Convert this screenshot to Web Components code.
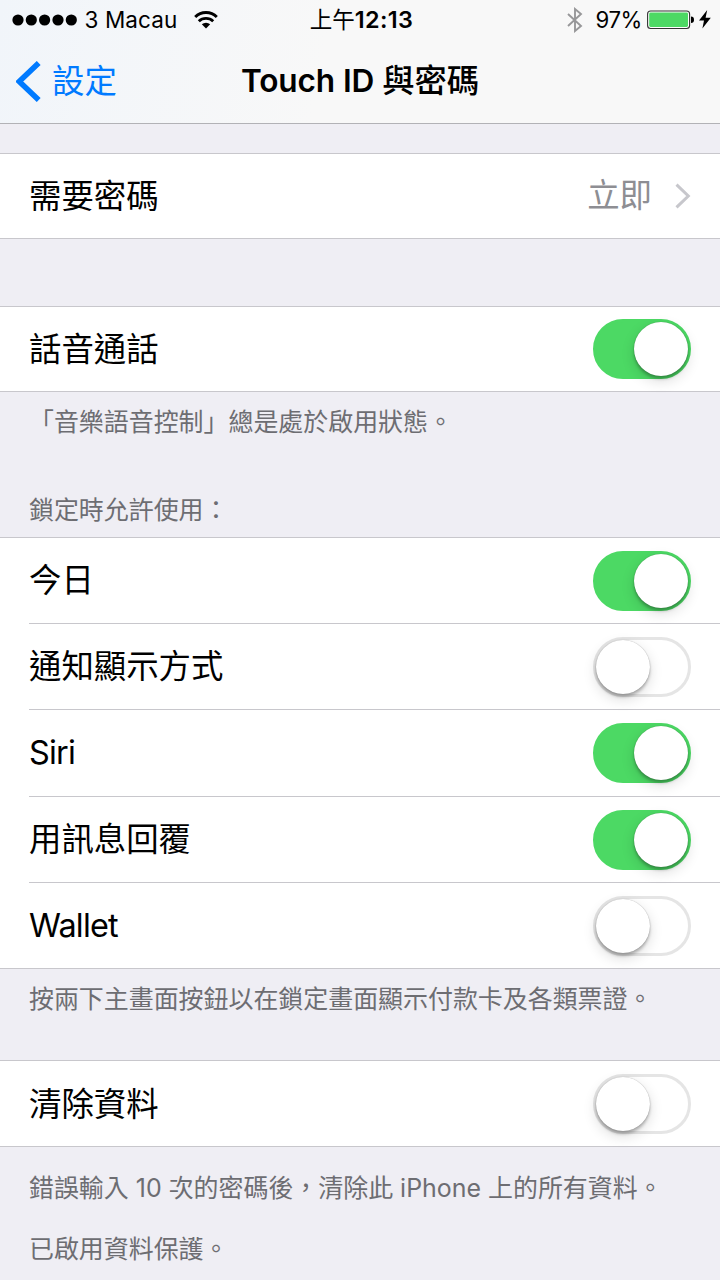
<!DOCTYPE html>
<html lang="zh-Hant">
<head>
<meta charset="utf-8">
<title>Touch ID 與密碼</title>
<style>
html,body{margin:0;background:#efeef4}
body{font-family:Inter,"Noto Sans CJK TC",sans-serif;width:720px;height:1280px;overflow:hidden;color:#000}
</style>
</head>
<body>
<settings-page></settings-page>
<script>
function define(name, html){
  const template=document.createElement('template');
  template.innerHTML=html;
  customElements.define(name,class extends HTMLElement{
    constructor(){super();this.attachShadow({mode:'open'}).appendChild(template.content.cloneNode(true));}
  });
}

define('status-bar',`
<style>
:host{display:grid;grid-template-columns:1fr auto 1fr;height:39px;align-items:center;font-size:22.5px;line-height:39px;white-space:nowrap}
svg{display:block;flex:none}
.left,.right{display:flex;align-items:center}
.left{padding-left:12px}
.right{justify-content:flex-end;padding-right:9px}
.carrier{margin:0 17px 0 6.5px;letter-spacing:.1px}
.time{font-weight:600;font-size:23.4px;letter-spacing:.4px;padding-left:3px}
.time span{font-weight:400;font-size:22.5px;letter-spacing:0}
.pct{margin:0 5px 0 13px;font-size:22.2px;letter-spacing:-.4px}
</style>
<div class="left">
<svg width="66" height="12" viewBox="0 0 66 12"><circle cx="6" cy="6" r="5.6"/><circle cx="19.3" cy="6" r="5.6"/><circle cx="32.6" cy="6" r="5.6"/><circle cx="46" cy="6" r="5.6"/><circle cx="59.3" cy="6" r="5.6"/></svg>
<span class="carrier">3 Macau</span>
<svg width="24" height="18" viewBox="0 0 24 18"><path d="M1.2 6.1A15 15 0 0 1 22.8 6.1M4.8 10.2A10.5 10.5 0 0 1 19.2 10.2" fill="none" stroke="#000" stroke-width="2.9"/><path d="M7.8 13.2A6.4 6.4 0 0 1 16.2 13.2L12 17.6Z"/></svg>
</div>
<div class="time"><span>上午</span>12:13</div>
<div class="right">
<svg width="16" height="26" viewBox="0 0 16 26"><path d="M1 7L14 19L8 24V2L14 7L1 19" fill="none" stroke="#979799" stroke-width="1.9"/></svg>
<span class="pct">97%</span>
<svg width="47" height="20" viewBox="0 0 47 20"><rect x=".6" y="1" width="42" height="17.5" rx="3" fill="#fff" stroke="#333" stroke-width="1.1"/><rect x="2.2" y="2.6" width="38.8" height="14.3" rx="1.4" fill="#4cd964"/><path d="M44 6.5Q47 6.5 47 9.7T44 13Z"/></svg>
<svg style="margin-left:5px" width="12" height="19" viewBox="0 0 12 19"><path d="M8.2 0L0 10.5H5L3.4 18.5L11.8 7.7H6.6Z"/></svg>
</div>`);

define('nav-bar',`
<style>
:host{display:grid;grid-template-columns:1fr auto 1fr;height:84px;align-items:center;border-bottom:1px solid #b2b2b6;line-height:82px;white-space:nowrap}
.back{display:flex;align-items:center;color:#007aff;font-size:32.4px;padding-left:16px;gap:11px}
.back span{padding-top:1px}
.title{font-size:31.6px;font-weight:600;letter-spacing:-.1px;padding-bottom:1px}
.title ::slotted([lang]){font-weight:500;font-size:32.3px;letter-spacing:0}
</style>
<div class="back"><svg width="25" height="41" viewBox="0 0 25 41"><path d="M22.7 2L3.2 20.5L22.7 39" fill="none" stroke="#007aff" stroke-width="5.6"/></svg><span><slot name="back"></slot></span></div>
<div class="title"><slot></slot></div>`);

define('toggle-switch',`
<style>
:host{display:flex;box-sizing:border-box;width:98px;height:60px;border-radius:30px;border:3px solid #e5e5e5;align-items:center;background:#fff}
:host([on]){background:#4cd964;border-color:#4cd964;justify-content:flex-end}
i{width:54px;height:54px;border-radius:50%;background:#fff;box-shadow:0 0 1px rgba(0,0,0,.35),0 3px 3px rgba(0,0,0,.24),0 5px 14px rgba(0,0,0,.14)}
</style><i></i>`);

define('chevron-right',`
<style>:host{display:block}svg{display:block}</style>
<svg width="16" height="26" viewBox="0 0 16 26"><path d="M1.5 1.7L13.3 13L1.5 24.3" fill="none" stroke="#c7c7cc" stroke-width="3"/></svg>`);

define('settings-row',`
<style>
:host{display:block;padding-left:29px;background:#fff}
.in{display:flex;align-items:center;box-sizing:border-box;height:var(--row,86px);padding-right:29px;border-bottom:1px solid #c8c7cc;font-size:32.4px;line-height:80px}
:host(:last-of-type) .in{border-bottom:0;height:var(--row,84px)}
:host(:only-of-type) .label{padding-top:2px}
.label{flex:1;letter-spacing:var(--tracking,0)}
.value{color:#8e8e93;display:flex;align-items:center;gap:23px}
</style>
<div class="in"><span class="label"><slot></slot></span><span class="value"><slot name="end"></slot></span></div>`);

define('settings-group',`
<style>
:host{display:flow-root;border:solid #c8c7cc;border-width:1px 0;background:#fff}
</style><slot></slot>`);

define('group-note',`
<style>
:host{display:flex;box-sizing:border-box;padding-left:29px;font-size:24.95px;color:#6d6d72;white-space:nowrap;line-height:36px}
</style><span><slot></slot></span>`);

define('settings-page',`
<style>
:host{display:flex;flex-direction:column;height:1280px;background:#efeef4}
header{background:linear-gradient(100deg,#f1f5fa,#f8f8f8 45%)}
.first{margin-top:29px}.second{margin-top:67px}
.voice{height:99px;padding-top:12px}.allow{height:46px;padding-top:1px}
.wallet{height:91px;padding-top:12px}
.erase{height:84px;padding-top:23px}
.tall{--row:87px}.end{--row:85px}
.latin{--tracking:-.8px}
</style>
<header><status-bar></status-bar><nav-bar><span slot="back">設定</span>Touch ID <span lang="zh-Hant">與密碼</span></nav-bar></header>
<settings-group class="first"><settings-row>需要密碼<span slot="end">立即</span><chevron-right slot="end"></chevron-right></settings-row></settings-group>
<settings-group class="second"><settings-row>話音通話<toggle-switch slot="end" on></toggle-switch></settings-row></settings-group>
<group-note class="voice">「音樂語音控制」總是處於啟用狀態。</group-note>
<group-note class="allow">鎖定時允許使用：</group-note>
<settings-group>
<settings-row>今日<toggle-switch slot="end" on></toggle-switch></settings-row>
<settings-row>通知顯示方式<toggle-switch slot="end"></toggle-switch></settings-row>
<settings-row class="latin tall">Siri<toggle-switch slot="end" on></toggle-switch></settings-row>
<settings-row>用訊息回覆<toggle-switch slot="end" on></toggle-switch></settings-row>
<settings-row class="latin end">Wallet<toggle-switch slot="end"></toggle-switch></settings-row>
</settings-group>
<group-note class="wallet">按兩下主畫面按鈕以在鎖定畫面顯示付款卡及各類票證。</group-note>
<settings-group><settings-row class="end">清除資料<toggle-switch slot="end"></toggle-switch></settings-row></settings-group>
<group-note class="erase">錯誤輸入 10 次的密碼後，清除此 iPhone 上的所有資料。</group-note>
<group-note>已啟用資料保護。</group-note>`);
</script>
</body>
</html>
